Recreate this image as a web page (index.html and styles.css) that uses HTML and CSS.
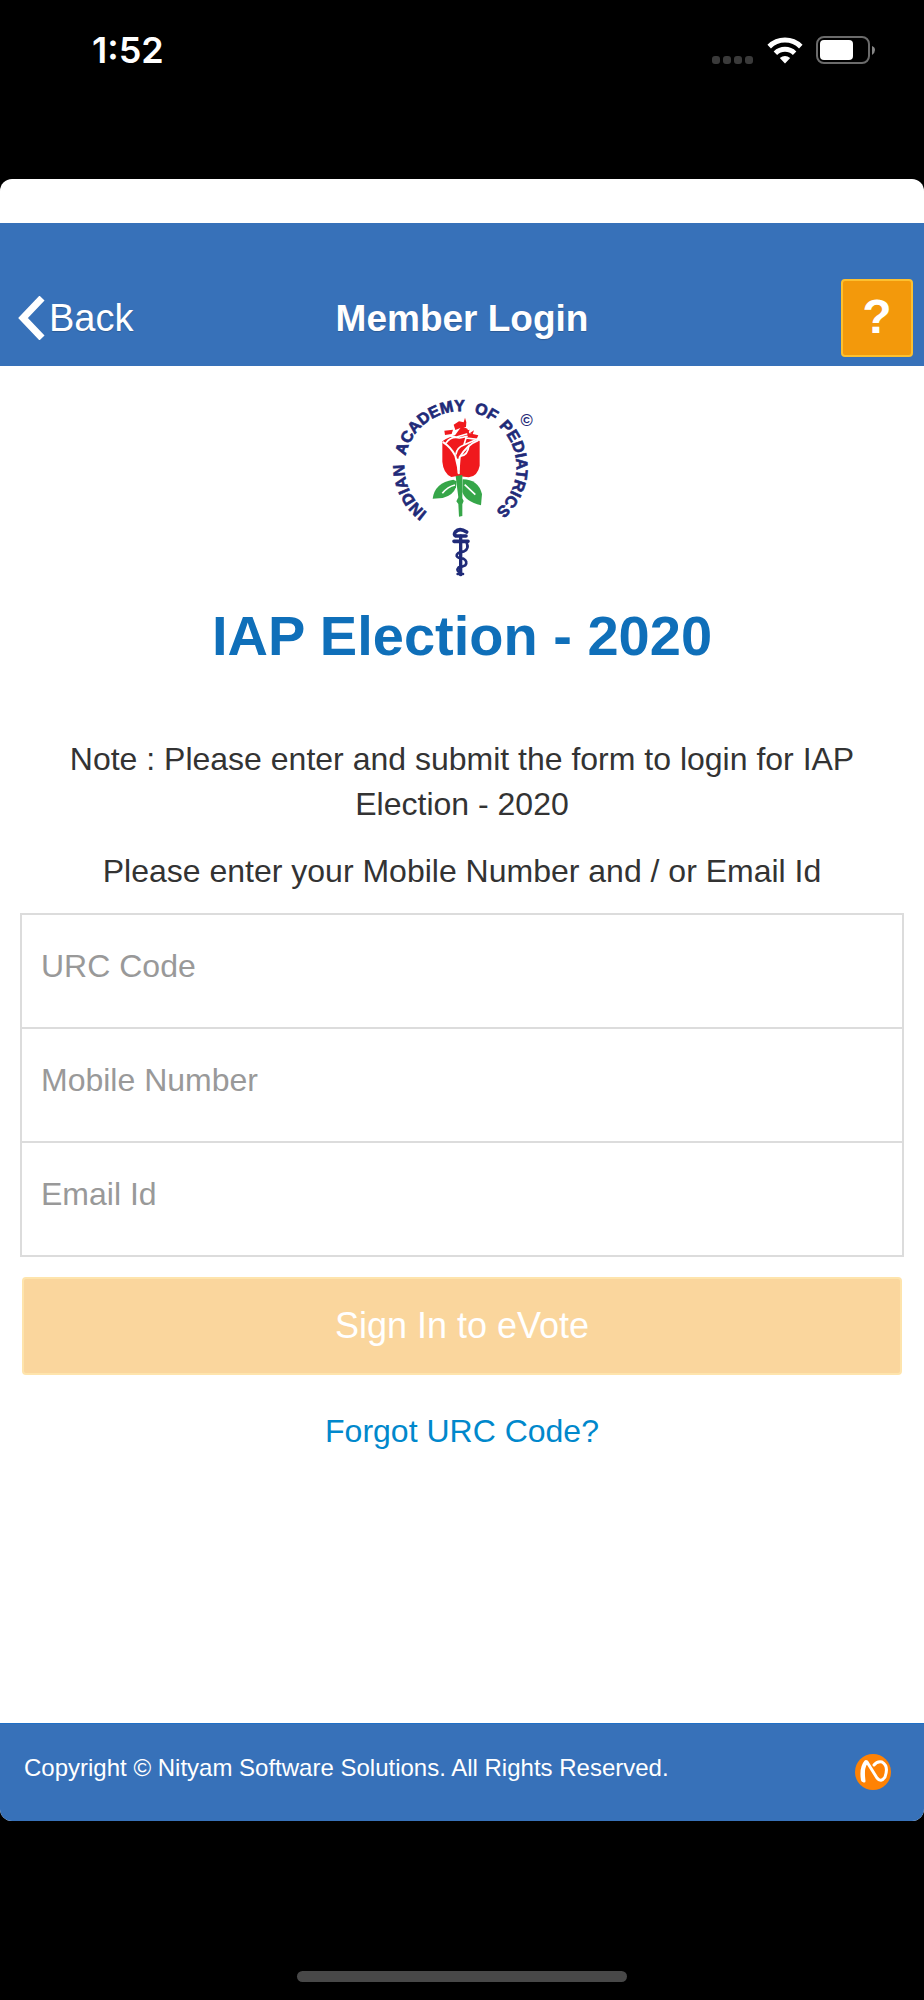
FILE: index.html
```html
<!DOCTYPE html>
<html lang="en">
<head>
    <meta charset="UTF-8">
    <meta name="viewport" content="width=device-width, initial-scale=1.0">
    <title>Member Login</title>
    <link rel="stylesheet" href="styles.css">
</head>

<body>
    <div class="status-bar">
        <span class="time">1:52</span>
        <div class="status-icons">
            <svg class="signal" width="42" height="8" viewBox="0 0 42 8" fill="#3a3a3a">
                <rect x="0" y="0" width="8" height="8" rx="3" />
                <rect x="11" y="0" width="8" height="8" rx="3" />
                <rect x="22" y="0" width="8" height="8" rx="3" />
                <rect x="33" y="0" width="8" height="8" rx="3" />
            </svg>
            <svg class="wifi" width="36" height="27" viewBox="0 0 36 27" fill="none" stroke="#fff" stroke-width="5">
                <path d="M2.2 9.6a22.5 22.5 0 0 1 31.6 0" />
                <path d="M8.4 16.2a13.8 13.8 0 0 1 19.2 0" />
                <path d="M18 26.5l-5.2-5.4q5.2-4.3 10.4 0z" fill="#fff" stroke="none" />
            </svg>
            <svg class="battery" width="60" height="28" viewBox="0 0 60 28">
                <rect x="1" y="1" width="52" height="26" rx="7" fill="none" stroke="#6b6b6b" stroke-width="2" />
                <rect x="4" y="4" width="33" height="20" rx="4" fill="#fff" />
                <path d="M56 10q3 1 3 4t-3 5z" fill="#858585" />
            </svg>
        </div>
    </div>

    <div class="sheet">
        <header class="header">
            <a class="back" href="#">
                <svg width="27" height="44" viewBox="0 0 27 44" fill="none" stroke="#fff" stroke-width="7">
                    <path d="M24 2L5 22l19 20" />
                </svg>
                <span>Back</span>
            </a>
            <h2 class="title">Member Login</h2>
            <button class="help" type="button">?</button>
        </header>

        <main class="main">
            <svg class="logo" width="180" height="210" viewBox="0 0 540 630">
                <path id="ring" d="M166 397A168 168 0 1 1 362 399" fill="none" />
                <g class="ring-text">
                    <text><textPath href="#ring" startOffset="0">INDIAN</textPath></text>
                    <text><textPath href="#ring" startOffset="192">ACADEMY</textPath></text>
                    <text><textPath href="#ring" startOffset="461">OF</textPath></text>
                    <text><textPath href="#ring" startOffset="547">PEDIATRICS</textPath></text>
                </g>
                <text class="mark" x="464" y="137" text-anchor="middle">©</text>
                <!-- rose -->
                <path fill="#f0191d" d="M211 184q22-14 38-18l20-27 17 7 6 14 27 6-7 15 11 2v74q-6 32-33 35l-34-4-18 3q-24-11-27-46z" />
                <path fill="#f0191d" d="M217 152l26-3-4 13-20 3zM245 134l16-10 14 3 4-14 4 14-1 14-17 3-15 6zM281 152l12-3-5 11zM293 160l13-9-4 12z" />
                <g fill="none" stroke="#fff" stroke-width="6" stroke-linecap="round" stroke-linejoin="round">
                    <path d="M214 187q22 14 36 40l10 43 3-38q22-38 54-50" />
                    <path d="M232 168l22 3 30-9M222 189q16-22 41-15l22-5M252 222q4-20 22-26l44-20M276 194l6-20 34 4M267 228q20-2 24-32" stroke-width="5" />
                    <path d="M258 239l2 40" stroke-width="7" />
                </g>
                <!-- stem and leaves -->
                <g fill="#36a649">
                    <path d="M251 288l20-3v70l4 8-4 10v35l-10 2-2-38-6-8 6-12z" />
                    <path d="M182 356q6-48 62-57l10 5-2 18q-9 25-40 32z" />
                    <path d="M272 298q46 0 58 44l-3 34q-48-12-56-40z" />
                </g>
                <path d="M211 340q16-20 38-25M278 314l32 30" fill="none" stroke="#fff" stroke-width="5" />
                <!-- staff with snake -->
                <g fill="none" stroke="#1f2a78" stroke-linecap="round" stroke-linejoin="round">
                    <path d="M266 468v116" stroke-width="10" />
                    <path d="M284 456q-22-14-34 0-6 8 2 12h30M246 484h42" stroke-width="11" />
                    <path d="M284 488q8 18-8 26-24 4-22 14 4 8 20 8 14 8 6 20-8 4-20 6-8 10 2 14" stroke-width="8" />
                    <path d="M257 582h16" stroke-width="8" />
                </g>
            </svg>

            <h1>IAP Election - 2020</h1>

            <form class="login-form">
                <p>Note : Please enter and submit the form to login for IAP Election - 2020</p>
                <p class="hint">Please enter your Mobile Number and / or Email Id</p>
                <div class="fields">
                    <input type="text" placeholder="URC Code" aria-label="URC Code">
                    <input type="tel" placeholder="Mobile Number" aria-label="Mobile Number">
                    <input type="email" placeholder="Email Id" aria-label="Email Id">
                </div>
                <button class="sign-in" type="submit" disabled>Sign In to eVote</button>
            </form>
            <a class="forgot" href="#">Forgot URC Code?</a>
        </main>

        <footer class="footer">
            <span>Copyright © Nityam Software Solutions. All Rights Reserved.</span>
            <svg width="36" height="36" viewBox="0 0 36 36">
                <circle cx="18" cy="18" r="18" fill="#ff8204" />
                <path d="M9 27Q7 12 12 8L22 24Q26 29 30 23Q34 12 27 8Q22 7 19 11" fill="none" stroke="#fff" stroke-width="3" stroke-linecap="round" stroke-linejoin="round" />
                <path d="M8 26Q6 14 11 8" fill="none" stroke="#fff" stroke-width="4" stroke-linecap="round" />
            </svg>
        </footer>
    </div>

    <div class="home-area">
        <div class="home-indicator"></div>
    </div>
</body>

</html>
```
FILE: styles.css
```css
* {
  box-sizing: border-box;
}
body {
  display: flex;
  flex-direction: column;
  min-height: 100vh;
  margin: 0;
  background-color: #000;
  color: #333;
  font-family: "Liberation Sans", Arial, sans-serif;
  font-size: 32px;
  line-height: 45px;
}
a {
  text-decoration: none;
}

/* status bar */
.status-bar {
  display: flex;
  justify-content: space-between;
  align-items: flex-start;
  height: 179px;
  padding: 28px 48px 0 92px;
}
.time {
  color: #fff;
  font-family: Inter, sans-serif;
  font-size: 36px;
  font-weight: 600;
}
.status-icons {
  display: flex;
  align-items: flex-end;
  padding-top: 8px;
}
.wifi {
  margin-left: 13px;
}
.battery {
  margin-left: 13px;
}

/* white sheet */
.sheet {
  display: flex;
  flex: 1;
  flex-direction: column;
  padding-top: 44px;
  overflow: hidden;
  border-radius: 12px;
  background-color: #fff;
}
.header {
  display: grid;
  grid-template-columns: 1fr auto 1fr;
  align-items: center;
  padding: 56px 11px 9px;
  background-color: #3771b9;
  color: #fff;
  font-size: 38px;
  text-shadow: 0 1px 1px rgba(0, 0, 0, 0.2);
}
.back {
  display: flex;
  align-items: center;
  gap: 4px;
  padding-left: 7px;
  color: #fff;
}
.title {
  margin: 0;
  font-size: 37px;
}
.help {
  justify-self: end;
  width: 72px;
  height: 78px;
  padding: 0 0 4px;
  border: 2px solid #fdc02f;
  border-radius: 4px;
  background-color: #f3990b;
  color: #fff;
  font: bold 48px "Liberation Sans", Arial, sans-serif;
}

.main {
  display: flex;
  flex: 1;
  flex-direction: column;
  align-items: center;
  padding: 14px 20px 0;
  text-align: center;
}
.ring-text {
  fill: #1f2a78;
  stroke: #1f2a78;
  stroke-width: 2px;
  font-size: 48px;
  font-weight: bold;
}
.mark {
  fill: #1f2a78;
  font-size: 50px;
  font-weight: bold;
}
h1 {
  margin: 16px 0 71px;
  color: #0f6fb9;
  font-size: 56px;
  line-height: 60px;
}
.login-form {
  width: 100%;
}
.login-form p {
  margin: 0 0 22px;
}
.login-form .hint {
  margin-bottom: 19px;
}
.fields {
  display: flex;
  flex-direction: column;
  border: 2px solid #dcdcdc;
}
.fields input {
  width: 100%;
  height: 114px;
  padding: 0 19px 10px;
  border: 0;
  border-bottom: 2px solid #dcdcdc;
  outline: none;
  color: #333;
  font: inherit;
}
.fields input:last-child {
  height: 112px;
  border-bottom: 0;
}
.fields input::placeholder {
  color: #999;
}
.sign-in {
  display: block;
  width: calc(100% - 4px);
  height: 98px;
  margin: 20px auto 34px;
  border: 2px solid #fee4ac;
  border-radius: 4px;
  background-color: #fad69d;
  color: #fff;
  font: 36px "Liberation Sans", Arial, sans-serif;
}
.forgot {
  color: #08c;
}

.footer {
  display: flex;
  justify-content: space-between;
  align-items: flex-start;
  height: 98px;
  padding: 21px 33px 0 24px;
  border-top: 1px solid #1f6fc6;
  background-color: #3771b9;
  color: #fff;
  font-size: 24px;
}
.footer svg {
  margin-top: 9px;
}

/* bottom of the phone */
.home-area {
  display: flex;
  justify-content: center;
  align-items: flex-end;
  height: 179px;
  padding-bottom: 18px;
}
.home-indicator {
  width: 330px;
  height: 11px;
  border-radius: 6px;
  background-color: #484848;
}
```
